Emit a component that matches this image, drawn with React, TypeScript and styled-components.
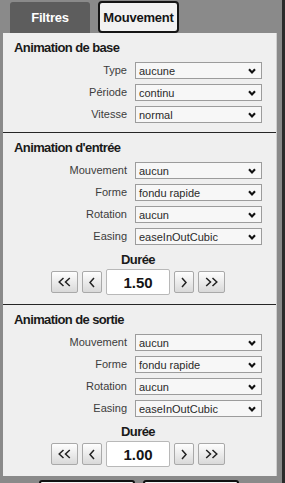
import React from "react";
import styled, { createGlobalStyle } from "styled-components";

const GlobalStyle = createGlobalStyle`
  html, body {
    margin: 0;
    padding: 0;
    background: #8a8a8a;
    overflow: hidden;
    font-family: "Liberation Sans", Arial, sans-serif;
  }
  * { box-sizing: border-box; }
`;

const Page = styled.div`
  display: flex;
  height: 100vh;
  overflow: hidden;
`;

const Main = styled.div`
  flex: 1;
  display: flex;
  flex-direction: column;
`;

const EdgeStrip = styled.div`
  width: 3px;
  background: #2b2b2b;
`;

const TabBar = styled.div`
  display: flex;
  align-items: flex-end;
  gap: 8px;
  height: 33px;
  flex-shrink: 0;
  padding-left: 10px;
`;

const Tab = styled.div<{ $active?: boolean }>`
  display: flex;
  align-items: center;
  justify-content: center;
  font-size: 13px;
  font-weight: bold;
  letter-spacing: -0.2px;
  ${({ $active }) =>
    $active
      ? `
    width: 81px;
    height: 32px;
    background: #f2f2f2;
    color: #151515;
    border: 2px solid #151515;
    border-radius: 4px;
  `
      : `
    width: 80px;
    height: 31px;
    background: #5d5d5d;
    color: #ffffff;
    border-radius: 3px 3px 0 0;
  `}
`;

const Panel = styled.div`
  flex-shrink: 0;
  margin-left: 3px;
  width: 274px;
  background: #efefef;
  border-right: 1px solid #cfcfcf;
`;

const Section = styled.section<{ $last?: boolean }>`
  padding: 7px 14px 9px 11px;
  border-bottom: ${({ $last }) => ($last ? "none" : "1px solid #262626")};
`;

const SectionTitle = styled.div`
  font-size: 13px;
  font-weight: bold;
  letter-spacing: -0.6px;
  line-height: 16px;
  color: #1a1a1a;
  margin-bottom: 6px;
`;

const FieldGrid = styled.div`
  display: grid;
  grid-template-columns: 1fr 127px;
  column-gap: 8px;
  row-gap: 5px;
`;

const FieldLabel = styled.div`
  font-size: 11px;
  line-height: 17px;
  color: #3c3c3c;
  text-align: right;
`;

const Dropdown = styled.div`
  height: 17px;
  display: flex;
  align-items: center;
  justify-content: space-between;
  padding: 0 5px 0 3px;
  border: 1px solid #9c9c9c;
  background: #f7f7f7;
  font-size: 11px;
  color: #2a2a2a;
`;

const DurationTitle = styled.div`
  margin-top: 7px;
  font-size: 13px;
  font-weight: bold;
  letter-spacing: -0.6px;
  line-height: 16px;
  color: #1a1a1a;
  text-align: center;
`;

const Stepper = styled.div`
  margin-top: 1px;
  display: flex;
  align-items: center;
  justify-content: center;
  gap: 4px;
  height: 26px;
`;

const StepButton = styled.div<{ $wide?: boolean }>`
  width: ${({ $wide }) => ($wide ? "27px" : "20px")};
  height: 22px;
  display: flex;
  align-items: center;
  justify-content: center;
  border: 1px solid #a9a9a9;
  border-radius: 2px;
  background: linear-gradient(#fefefe, #d9d9d9);
`;

const ValueBox = styled.div`
  width: 64px;
  height: 26px;
  display: flex;
  align-items: center;
  justify-content: center;
  border: 1px solid #b8b8b8;
  border-radius: 2px;
  background: #ffffff;
  font-size: 15px;
  font-weight: bold;
  color: #151515;
`;

const FooterBar = styled.div`
  margin-top: 4px;
  display: flex;
  justify-content: center;
  gap: 8px;
  padding-right: 4px;
`;

const FooterButton = styled.div`
  width: 96px;
  height: 30px;
  flex-shrink: 0;
  border: 2px solid #111;
  border-radius: 3px;
  background: #f4f4f4;
`;

const DropChevron = () => (
  <svg width="8" height="6" viewBox="0 0 8 6">
    <polyline points="1,1.2 4,4.4 7,1.2" fill="none" stroke="#111" strokeWidth="2.1" />
  </svg>
);

const Single = ({ dir }: { dir: "l" | "r" }) => (
  <svg width="6" height="11" viewBox="0 0 6 11">
    <polyline
      points={dir === "l" ? "5,1 1,5.5 5,10" : "1,1 5,5.5 1,10"}
      fill="none"
      stroke="#222"
      strokeWidth="1.5"
    />
  </svg>
);

const Double = ({ dir }: { dir: "l" | "r" }) => (
  <svg width="13" height="10" viewBox="0 0 13 10">
    {dir === "l" ? (
      <>
        <polyline points="5.5,1 1.2,5 5.5,9" fill="none" stroke="#222" strokeWidth="1.5" />
        <polyline points="11.8,1 7.5,5 11.8,9" fill="none" stroke="#222" strokeWidth="1.5" />
      </>
    ) : (
      <>
        <polyline points="1.2,1 5.5,5 1.2,9" fill="none" stroke="#222" strokeWidth="1.5" />
        <polyline points="7.5,1 11.8,5 7.5,9" fill="none" stroke="#222" strokeWidth="1.5" />
      </>
    )}
  </svg>
);

type Field = { label: string; value: string };

const Fields = ({ items }: { items: Field[] }) => (
  <FieldGrid>
    {items.map((f) => (
      <React.Fragment key={f.label}>
        <FieldLabel>{f.label}</FieldLabel>
        <Dropdown>
          <span>{f.value}</span>
          <DropChevron />
        </Dropdown>
      </React.Fragment>
    ))}
  </FieldGrid>
);

const Duration = ({ value }: { value: string }) => (
  <>
    <DurationTitle>Durée</DurationTitle>
    <Stepper>
      <StepButton $wide>
        <Double dir="l" />
      </StepButton>
      <StepButton>
        <Single dir="l" />
      </StepButton>
      <ValueBox>{value}</ValueBox>
      <StepButton>
        <Single dir="r" />
      </StepButton>
      <StepButton $wide>
        <Double dir="r" />
      </StepButton>
    </Stepper>
  </>
);

const transitionFields: Field[] = [
  { label: "Mouvement", value: "aucun" },
  { label: "Forme", value: "fondu rapide" },
  { label: "Rotation", value: "aucun" },
  { label: "Easing", value: "easeInOutCubic" },
];

export default function App() {
  return (
    <>
      <GlobalStyle />
      <Page>
        <Main>
          <TabBar>
            <Tab>Filtres</Tab>
            <Tab $active>Mouvement</Tab>
          </TabBar>
          <Panel>
            <Section>
              <SectionTitle>Animation de base</SectionTitle>
              <Fields
                items={[
                  { label: "Type", value: "aucune" },
                  { label: "Période", value: "continu" },
                  { label: "Vitesse", value: "normal" },
                ]}
              />
            </Section>
            <Section>
              <SectionTitle>Animation d'entrée</SectionTitle>
              <Fields items={transitionFields} />
              <Duration value="1.50" />
            </Section>
            <Section $last>
              <SectionTitle>Animation de sortie</SectionTitle>
              <Fields items={transitionFields} />
              <Duration value="1.00" />
            </Section>
          </Panel>
          <FooterBar>
            <FooterButton />
            <FooterButton />
          </FooterBar>
        </Main>
        <EdgeStrip />
      </Page>
    </>
  );
}
